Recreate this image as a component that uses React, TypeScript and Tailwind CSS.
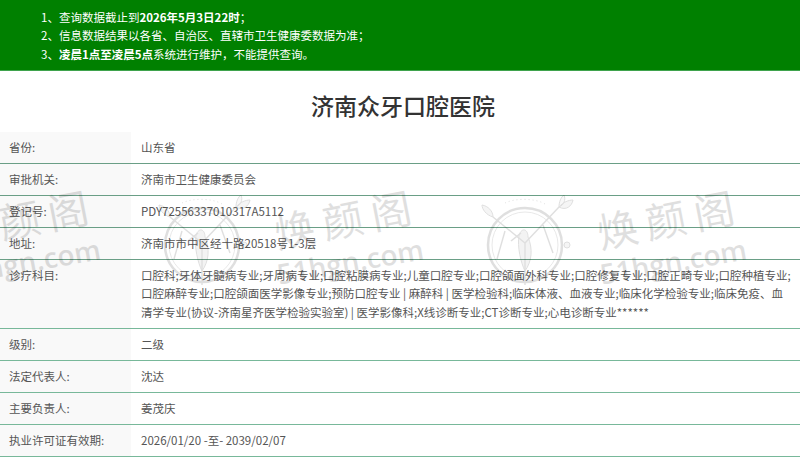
import React from 'react';

interface InfoRow {
    label: string;
    value: string;
    tall?: boolean;
    line: string;
}

const rows: InfoRow[] = [
    { label: '省份:', value: '山东省', line: 'border-[#6a9f86]' },
    { label: '审批机关:', value: '济南市卫生健康委员会', line: 'border-[#6a9f86]' },
    { label: '登记号:', value: 'PDY72556337010317A5112', line: 'border-[#6a9f86]' },
    { label: '地址:', value: '济南市市中区经十路20518号1-3层', line: 'border-[#6a9f86]' },
    {
        label: '诊疗科目:',
        value: '口腔科;牙体牙髓病专业;牙周病专业;口腔粘膜病专业;儿童口腔专业;口腔颌面外科专业;口腔修复专业;口腔正畸专业;口腔种植专业;\n口腔麻醉专业;口腔颌面医学影像专业;预防口腔专业 | 麻醉科 | 医学检验科;临床体液、血液专业;临床化学检验专业;临床免疫、血\n清学专业(协议-济南星齐医学检验实验室) | 医学影像科;X线诊断专业;CT诊断专业;心电诊断专业******',
        tall: true,
        line: 'border-[#78b89a]',
    },
    { label: '级别:', value: '二级', line: 'border-[#78b89a]' },
    { label: '法定代表人:', value: '沈达', line: 'border-[#78b89a]' },
    { label: '主要负责人:', value: '姜茂庆', line: 'border-[#78b89a]' },
    { label: '执业许可证有效期:', value: '2026/01/20 -至- 2039/02/07', line: 'border-[#78b89a]' },
];

// Round plant logo of the watermark
const WatermarkLogo = () => (
    <svg viewBox="0 0 100 100" className="absolute left-[-50px] top-[-50px] w-[100px] h-[100px]" fill="none" stroke="#000" strokeWidth="1">
        <circle cx="50" cy="50" r="37" strokeWidth="2.5" />
        <circle cx="50" cy="50" r="33" strokeWidth="0.7" />
        <path d="M18 22 L50 48 L84 12 M50 48 L50 90 M30 36 L22 64 M68 30 L78 58" strokeWidth="1.4" />
        <path d="M44 40 C47 32 53 34 53 42 C58 54 57 66 50 76 C46 68 42 52 44 40 Z" fill="#000" fillOpacity="0.35" />
        <path d="M36 46 L46 38" strokeWidth="1.6" />
        <path d="M84 12 C88 7 94 5 98 5 C97 11 91 16 84 12 Z" fill="#000" fillOpacity="0.3" />
        <path d="M84 12 C84 7 86 2 89 0 C91 5 89 10 84 12 Z" fill="#000" fillOpacity="0.2" />
        <path d="M18 22 C11 20 7 14 7 10 C13 11 18 16 18 22 Z" fill="#000" fillOpacity="0.3" />
        <path d="M30 8 C40 3 60 3 70 9" strokeDasharray="1 3" />
        <circle cx="92" cy="50" r="3" fill="#000" fillOpacity="0.3" />
    </svg>
);

// One tile of the watermark, placed by its wrapper
const Watermark: React.FC<{ className: string }> = ({ className }) => (
    <div className={`absolute top-[245px] opacity-[0.12] ${className}`}>
        <WatermarkLogo />
        <div className="absolute left-[72px] top-[-38px] -rotate-[11deg] origin-left whitespace-nowrap text-[41px] leading-[48px] tracking-[8px] font-normal text-black">
            焕颜阁
        </div>
        <div className="absolute left-[75px] top-[11px] -rotate-[10deg] origin-left whitespace-nowrap font-['Open_Sans',sans-serif] text-[28px] leading-[36px] font-semibold text-black">
            51hgn.com
        </div>
    </div>
);

export default function App() {
    return (
        <div className="relative w-[800px] h-[462px] overflow-hidden bg-white font-['Noto_Sans_CJK_SC','Open_Sans',sans-serif] text-[11.5px] leading-[18.4px] text-[#555]">
            {/* Notice banner */}
            <div className="h-[71px] bg-[#008000] border-b border-[#3fa34d] pt-2 pl-[41px] text-white">
                <p>1、查询数据截止到<b>2026年5月3日22时</b>；</p>
                <p>2、信息数据结果以各省、自治区、直辖市卫生健康委数据为准；</p>
                <p>3、<b>凌晨1点至凌晨5点</b>系统进行维护，不能提供查询。</p>
            </div>

            <h1 className="h-[61px] pt-[8px] pl-[6px] flex items-center justify-center text-[23px] font-medium text-[#333]">
                济南众牙口腔医院
            </h1>

            {/* Info table */}
            <div className="flex flex-col">
                {rows.map((row) => (
                    <div
                        key={row.label}
                        className={`flex border-b ${row.line} ${row.tall ? 'h-[69px]' : 'h-[32px]'}`}
                    >
                        <div className="w-[131px] shrink-0 bg-[#f9f9f9] pl-[9px] pt-[6px]">{row.label}</div>
                        <div className="flex-1 pl-[10px] pt-[6px] whitespace-pre">{row.value}</div>
                    </div>
                ))}
            </div>

            <div className="absolute inset-0 pointer-events-none">
                <Watermark className="left-[-121px]" />
                <Watermark className="left-[202px]" />
                <Watermark className="left-[525px]" />
            </div>
        </div>
    );
}
